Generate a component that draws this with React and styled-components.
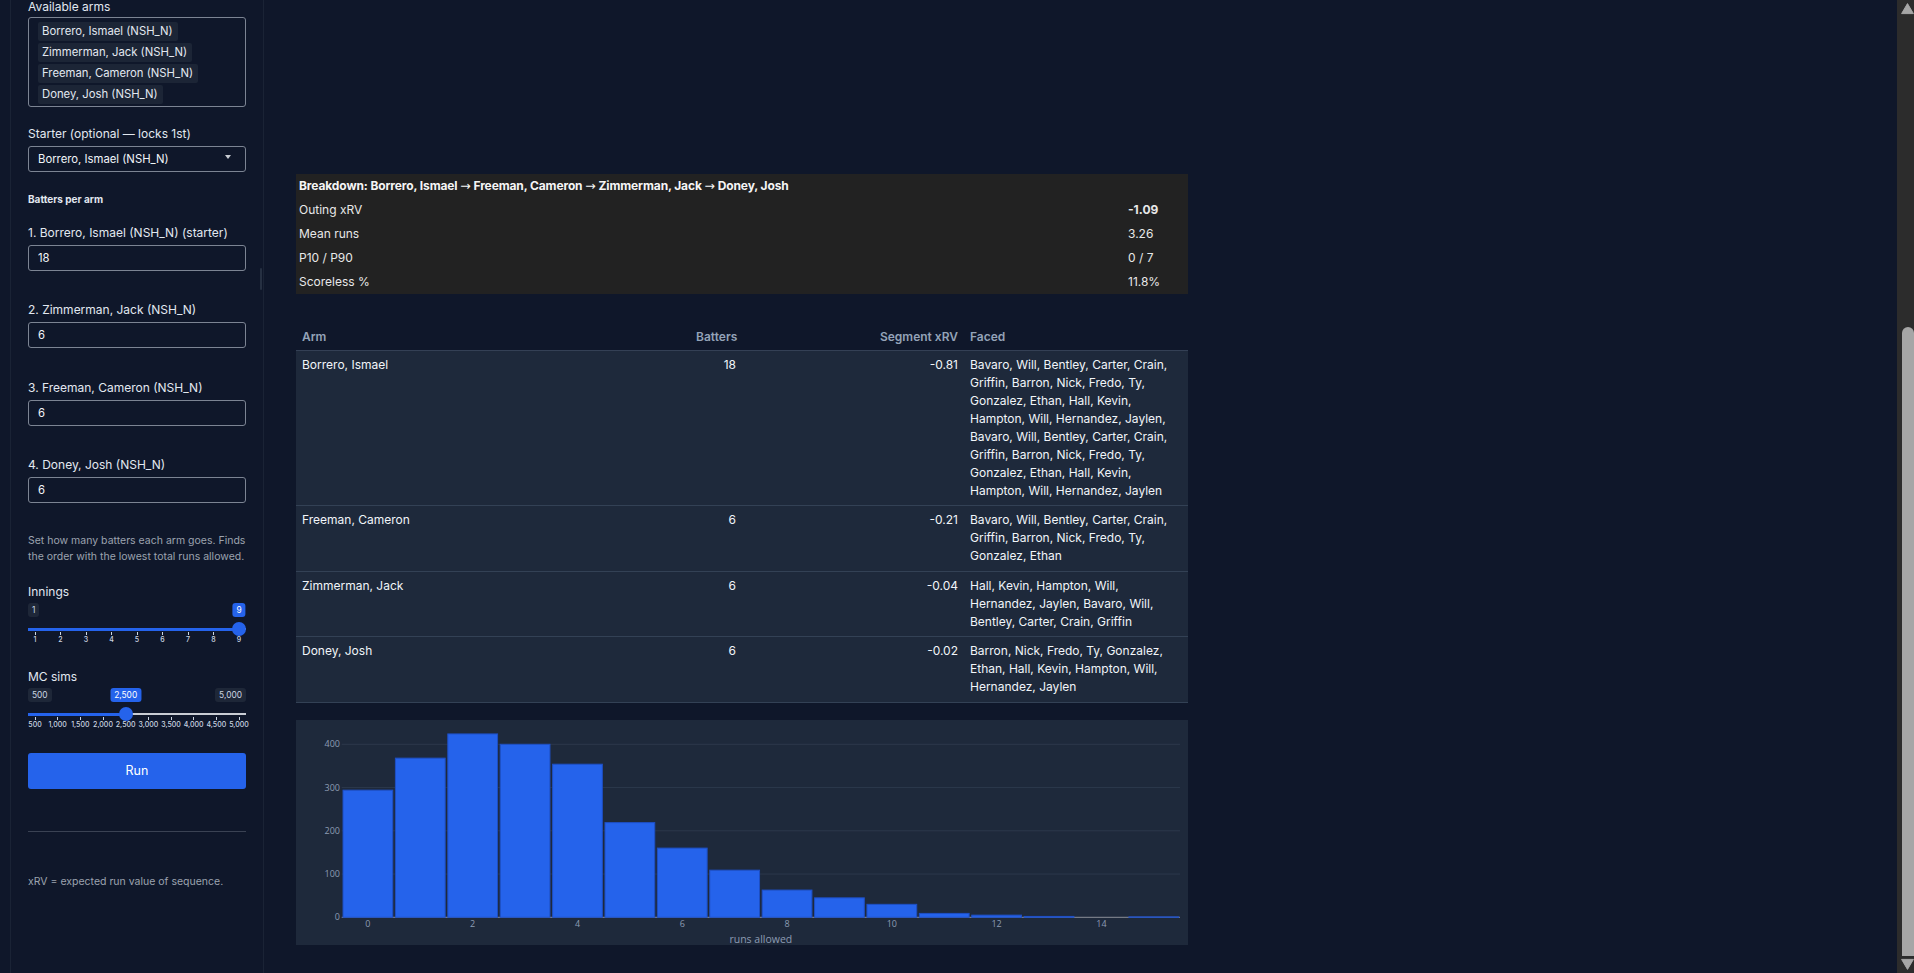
import React from 'react';
import styled, { createGlobalStyle } from 'styled-components';

const GlobalStyle = createGlobalStyle`
  html, body { margin: 0; padding: 0; height: 100%; overflow: hidden; background: #0f172a; }
  #root { height: 100%; }
  *, *::before, *::after { box-sizing: border-box; }
  body { font-family: Inter, "Noto Sans", sans-serif; color: #e2e8f0; }
`;

const Frame = styled.div`
  display: flex;
  height: 100vh;
  background: #0f172a;
`;

const Viewport = styled.div`
  flex: 1;
  min-width: 0;
  overflow: hidden;
  display: flex;
  flex-direction: column-reverse;
`;

const ScrollRail = styled.div`
  flex: none;
  width: 17px;
  display: flex;
  flex-direction: column;
  background: #2c2c2c;
`;

const RailButton = styled.div`
  flex: none;
  height: 17px;
  display: flex;
  svg { display: block; }
`;

const RailTrack = styled.div`
  flex: 1;
  display: flex;
  flex-direction: column;
  padding: 310px 0 0 5px;
`;

const RailThumb = styled.div`
  flex: 1;
  background: #a6a6a6;
  border-radius: 6px 6px 0 0;
`;

const Layout = styled.div`
  flex: none;
  display: flex;
  min-height: 983px;
  padding-left: 10px;
`;

const Sidebar = styled.aside`
  position: relative;
  flex: none;
  width: 254px;
  border-left: 1px solid #1a2335;
  border-right: 1px solid #1a2335;
  padding: 7.7px 17px 0;
  display: flex;
  flex-direction: column;
`;

const CollapseHandle = styled.span`
  position: absolute;
  left: 249px;
  top: 278px;
  width: 2px;
  height: 22px;
  background: #263042;
  border-radius: 1px;
`;

const Label = styled.div`
  font-size: 12px;
  line-height: 18px;
  color: #e2e8f0;
  margin-top: ${p => p.$mt || 0}px;
  margin-bottom: ${p => (p.$mb ?? 3)}px;
  white-space: nowrap;
`;

const SectionTitle = styled.div`
  font-size: 10px;
  line-height: 14px;
  font-weight: 700;
  color: #e2e8f0;
  margin-top: ${p => p.$mt || 0}px;
`;

const ListBox = styled.div`
  height: 90px;
  border: 1px solid #7c8493;
  border-radius: 3px;
  padding: 4px 9px 2px;
  display: flex;
  flex-direction: column;
  align-items: flex-start;
  gap: 2px;
`;

const Chip = styled.div`
  height: 19px;
  line-height: 19px;
  padding: 0 5px 0 4px;
  background: #1c2536;
  border-radius: 2px;
  font-size: 11.3px;
  color: #e2e8f0;
  white-space: nowrap;
`;

const SelectBox = styled.div`
  height: 26px;
  border: 1px solid #7c8493;
  border-radius: 3px;
  display: flex;
  align-items: center;
  justify-content: space-between;
  padding: 0 14px 0 9px;
  font-size: 11.3px;
  color: #f1f5f9;
`;

const Caret = styled.span`
  width: 0;
  height: 0;
  margin-top: -3px;
  border-left: 3.5px solid transparent;
  border-right: 3.5px solid transparent;
  border-top: 4px solid #c8ccd2;
`;

const NumInput = styled.input`
  display: block;
  width: 100%;
  height: 26px;
  border: 1px solid #7c8493;
  border-radius: 3px;
  background: transparent;
  padding: 0 9px;
  font-family: Inter, "Noto Sans", sans-serif;
  font-size: 11.3px;
  color: #f1f5f9;
  outline: none;
`;

const HelpText = styled.p`
  margin: ${p => p.$mt || 0}px 0 0;
  font-size: 10.5px;
  line-height: 16px;
  color: #9ca3af;
`;

const SliderBox = styled.div`
  position: relative;
  height: 41px;
  margin-top: 2.3px;
`;

const ValueTag = styled.span`
  position: absolute;
  top: 0;
  height: 14px;
  line-height: 14px;
  padding: 0 4px;
  border-radius: 3px;
  font-size: 8.4px;
  white-space: nowrap;
  background: ${p => (p.$active ? '#2563eb' : '#1e2738')};
  color: ${p => (p.$active ? '#ffffff' : '#cbd5e1')};
`;

const TrackBase = styled.span`
  position: absolute;
  left: 0;
  right: 0;
  top: 25.3px;
  height: 1.6px;
  background: #c9cdd4;
`;

const TrackFill = styled.span`
  position: absolute;
  left: 0;
  top: 24.8px;
  height: 3px;
  background: #2563eb;
`;

const Handle = styled.span`
  position: absolute;
  top: 19.3px;
  width: 14px;
  height: 14px;
  margin-left: -7px;
  border-radius: 50%;
  background: #2563eb;
`;

const Tick = styled.span`
  position: absolute;
  top: 29px;
  width: 1px;
  height: 3px;
  background: #cbd5e1;
`;

const TickLabel = styled.span`
  position: absolute;
  top: 32px;
  line-height: 9px;
  font-size: 7px;
  font-weight: 500;
  color: #cbd5e1;
  transform: translateX(-50%);
  white-space: nowrap;
`;

const RunButton = styled.button`
  display: block;
  width: 100%;
  height: 36px;
  margin-top: 24px;
  border: none;
  border-radius: 3px;
  background: #2563eb;
  color: #ffffff;
  font-family: Inter, "Noto Sans", sans-serif;
  font-size: 12.5px;
`;

const Rule = styled.hr`
  margin: 42px 0 0;
  border: none;
  border-top: 1px solid #3a4253;
`;

const Main = styled.main`
  flex: 1;
  padding: 184px 0 0 32px;
  display: flex;
  flex-direction: column;
  align-items: flex-start;
`;

const SummaryTable = styled.table`
  width: 892px;
  border-collapse: collapse;
  background: #222222;
  color: #e8e8e8;
  font-size: 12px;
  td {
    height: 24px;
    padding: 0 3px;
    line-height: 18px;
    vertical-align: middle;
  }
`;

const SummaryTitle = styled.td`
  font-weight: 700;
  letter-spacing: -0.12px;
  color: #f5f5f5;
`;

const Arrow = styled.span`
  font-family: "DejaVu Sans", "Liberation Sans", sans-serif;
  font-weight: 400;
  font-size: 12.5px;
  letter-spacing: 0;
`;

const SummaryValue = styled.td`
  width: 63px;
  font-weight: ${p => (p.$bold ? 700 : 400)};
`;

const SegTable = styled.table`
  width: 892px;
  margin-top: 31px;
  border-collapse: collapse;
  table-layout: fixed;
  font-size: 12px;
`;

const HeadCell = styled.th`
  height: 25px;
  padding: 0 6px;
  line-height: 18px;
  font-weight: 600;
  color: #94a3b8;
  text-align: ${p => p.$align || 'left'};
  border-bottom: 1px solid #344055;
`;

const Row = styled.tr`
  background: #1e293b;
  border-bottom: 1px solid #334155;
`;

const Cell = styled.td`
  padding: 5px ${p => p.$pr ?? 6}px 5.5px 6px;
  line-height: 18px;
  vertical-align: top;
  color: #f1f5f9;
  text-align: ${p => p.$align || 'left'};
`;

const ChartBox = styled.div`
  width: 892px;
  height: 225px;
  margin-top: 17px;
  background: #1e293b;
`;

const arms = [
  'Borrero, Ismael (NSH_N)',
  'Zimmerman, Jack (NSH_N)',
  'Freeman, Cameron (NSH_N)',
  'Doney, Josh (NSH_N)',
];

const battersFields = [
  { label: '1. Borrero, Ismael (NSH_N) (starter)', value: '18' },
  { label: '2. Zimmerman, Jack (NSH_N)', value: '6' },
  { label: '3. Freeman, Cameron (NSH_N)', value: '6' },
  { label: '4. Doney, Josh (NSH_N)', value: '6' },
];

const order = ['Borrero, Ismael', 'Freeman, Cameron', 'Zimmerman, Jack', 'Doney, Josh'];

const lineupA =
  'Bavaro, Will, Bentley, Carter, Crain, Griffin, Barron, Nick, Fredo, Ty, Gonzalez, Ethan, Hall, Kevin, Hampton, Will, Hernandez, Jaylen';

const segments = [
  { arm: 'Borrero, Ismael', batters: 18, xrv: '-0.81', faced: `${lineupA}, ${lineupA}` },
  { arm: 'Freeman, Cameron', batters: 6, xrv: '-0.21', faced: 'Bavaro, Will, Bentley, Carter, Crain, Griffin, Barron, Nick, Fredo, Ty, Gonzalez, Ethan' },
  { arm: 'Zimmerman, Jack', batters: 6, xrv: '-0.04', faced: 'Hall, Kevin, Hampton, Will, Hernandez, Jaylen, Bavaro, Will, Bentley, Carter, Crain, Griffin' },
  { arm: 'Doney, Josh', batters: 6, xrv: '-0.02', faced: 'Barron, Nick, Fredo, Ty, Gonzalez, Ethan, Hall, Kevin, Hampton, Will, Hernandez, Jaylen' },
];

const counts = [294, 368, 424, 400, 354, 219, 160, 109, 63, 45, 30, 9, 5, 2, 0, 1];

const fmt = n => n.toLocaleString('en-US');

function RangeSlider({ min, max, step, value }) {
  const W = 218;
  const pos = v => 7 + ((v - min) / (max - min)) * (W - 14);
  const ticks = [];
  for (let v = min; v <= max + 1e-9; v += step) ticks.push(v);
  const hv = pos(value);
  return (
    <SliderBox>
      {value !== min && <ValueTag style={{ left: 0 }}>{fmt(min)}</ValueTag>}
      {value !== max && <ValueTag style={{ right: 0 }}>{fmt(max)}</ValueTag>}
      <ValueTag $active style={{ left: hv, transform: 'translateX(-50%)' }}>{fmt(value)}</ValueTag>
      <TrackBase />
      <TrackFill style={{ width: hv }} />
      {ticks.map(t => (
        <React.Fragment key={t}>
          <Tick style={{ left: pos(t) - 0.5 }} />
          <TickLabel style={{ left: pos(t) }}>{fmt(t)}</TickLabel>
        </React.Fragment>
      ))}
      <Handle style={{ left: hv }} />
    </SliderBox>
  );
}

function RunsChart() {
  const W = 892, H = 225, L = 45.7, R = 884, Y0 = 197.3, PX = 0.4325;
  const pitch = (R - L) / counts.length;
  const tickColor = '#8d9cb3';
  const font = "'Open Sans', sans-serif";
  return (
    <svg width={W} height={H} viewBox={`0 0 ${W} ${H}`} style={{ display: 'block' }}>
      {[100, 200, 300, 400].map(v => (
        <line key={v} x1={L} x2={R} y1={Y0 - v * PX} y2={Y0 - v * PX} stroke="#2c384c" strokeWidth="1" />
      ))}
      <line x1={L} x2={R} y1={Y0} y2={Y0} stroke="#8a8f99" strokeWidth="1" />
      {counts.map((c, i) =>
        c > 0 ? (
          <rect
            key={i}
            x={L + i * pitch + pitch * 0.025}
            y={Y0 - c * PX}
            width={pitch * 0.95}
            height={c * PX}
            fill="#2563eb"
            stroke="#1e4fc4"
            strokeWidth="1"
          />
        ) : null
      )}
      {[0, 100, 200, 300, 400].map(v => (
        <text key={v} x={44} y={Y0 - v * PX} dy="0.35em" textAnchor="end" fontFamily={font} fontSize="9" fill={tickColor}>
          {v}
        </text>
      ))}
      {[0, 2, 4, 6, 8, 10, 12, 14].map(v => (
        <text key={v} x={L + (v + 0.5) * pitch} y={204.3} dy="0.35em" textAnchor="middle" fontFamily={font} fontSize="9" fill={tickColor}>
          {v}
        </text>
      ))}
      <text x={(L + R) / 2} y={219} dy="0.35em" textAnchor="middle" fontFamily={font} fontSize="10.5" fill={tickColor}>
        runs allowed
      </text>
    </svg>
  );
}

function ScrollBar() {
  return (
    <ScrollRail>
      <RailButton>
        <svg width="17" height="17" viewBox="0 0 17 17">
          <path d="M10.5 3.6 L16.4 13.6 L4.6 13.6 Z" fill="#a6a6a6" stroke="#a6a6a6" strokeWidth="1" strokeLinejoin="round" />
        </svg>
      </RailButton>
      <RailTrack>
        <RailThumb />
      </RailTrack>
      <RailButton>
        <svg width="17" height="17" viewBox="0 0 17 17">
          <path d="M10.5 13.4 L16.4 3.4 L4.6 3.4 Z" fill="#a6a6a6" stroke="#a6a6a6" strokeWidth="1" strokeLinejoin="round" />
        </svg>
      </RailButton>
    </ScrollRail>
  );
}

export default function App() {
  return (
    <>
      <GlobalStyle />
      <Frame>
        <Viewport>
          <Layout>
            <Sidebar>
              <CollapseHandle />
              <Label $mb={1.3}>Available arms</Label>
              <ListBox>
                {arms.map(a => (
                  <Chip key={a}>{a}</Chip>
                ))}
              </ListBox>

              <Label $mt={18}>Starter (optional — locks 1st)</Label>
              <SelectBox>
                <span>Borrero, Ismael (NSH_N)</span>
                <Caret />
              </SelectBox>

              <SectionTitle $mt={19.7}>Batters per arm</SectionTitle>

              {battersFields.map((f, i) => (
                <React.Fragment key={f.label}>
                  <Label $mt={i === 0 ? 18 : 30.5}>{f.label}</Label>
                  <NumInput type="text" defaultValue={f.value} />
                </React.Fragment>
              ))}

              <HelpText $mt={29.8}>
                Set how many batters each arm goes. Finds the order with the lowest total runs allowed.
              </HelpText>

              <Label $mt={17.7} $mb={0}>Innings</Label>
              <RangeSlider min={1} max={9} step={1} value={9} />

              <Label $mt={23.7} $mb={0}>MC sims</Label>
              <RangeSlider min={500} max={5000} step={500} value={2500} />

              <RunButton type="button">Run</RunButton>
              <Rule />
              <HelpText $mt={41.7}>xRV = expected run value of sequence.</HelpText>
            </Sidebar>

            <Main>
              <SummaryTable>
                <tbody>
                  <tr>
                    <SummaryTitle colSpan={2}>
                      Breakdown:{' '}
                      {order.map((n, i) => (
                        <React.Fragment key={n}>
                          {i > 0 && (
                            <>
                              {' '}
                              <Arrow>→</Arrow>{' '}
                            </>
                          )}
                          {n}
                        </React.Fragment>
                      ))}
                    </SummaryTitle>
                  </tr>
                  <tr>
                    <td>Outing xRV</td>
                    <SummaryValue $bold>-1.09</SummaryValue>
                  </tr>
                  <tr>
                    <td>Mean runs</td>
                    <SummaryValue>3.26</SummaryValue>
                  </tr>
                  <tr>
                    <td>P10 / P90</td>
                    <SummaryValue>0 / 7</SummaryValue>
                  </tr>
                  <tr>
                    <td>Scoreless %</td>
                    <SummaryValue>11.8%</SummaryValue>
                  </tr>
                </tbody>
              </SummaryTable>

              <SegTable>
                <colgroup>
                  <col style={{ width: 394 }} />
                  <col style={{ width: 52 }} />
                  <col style={{ width: 222 }} />
                  <col style={{ width: 224 }} />
                </colgroup>
                <thead>
                  <tr>
                    <HeadCell>Arm</HeadCell>
                    <HeadCell $align="right">Batters</HeadCell>
                    <HeadCell $align="right">Segment xRV</HeadCell>
                    <HeadCell>Faced</HeadCell>
                  </tr>
                </thead>
                <tbody>
                  {segments.map(s => (
                    <Row key={s.arm}>
                      <Cell>{s.arm}</Cell>
                      <Cell $align="right">{s.batters}</Cell>
                      <Cell $align="right">{s.xrv}</Cell>
                      <Cell $pr={12}>{s.faced}</Cell>
                    </Row>
                  ))}
                </tbody>
              </SegTable>

              <ChartBox>
                <RunsChart />
              </ChartBox>
            </Main>
          </Layout>
        </Viewport>
        <ScrollBar />
      </Frame>
    </>
  );
}
